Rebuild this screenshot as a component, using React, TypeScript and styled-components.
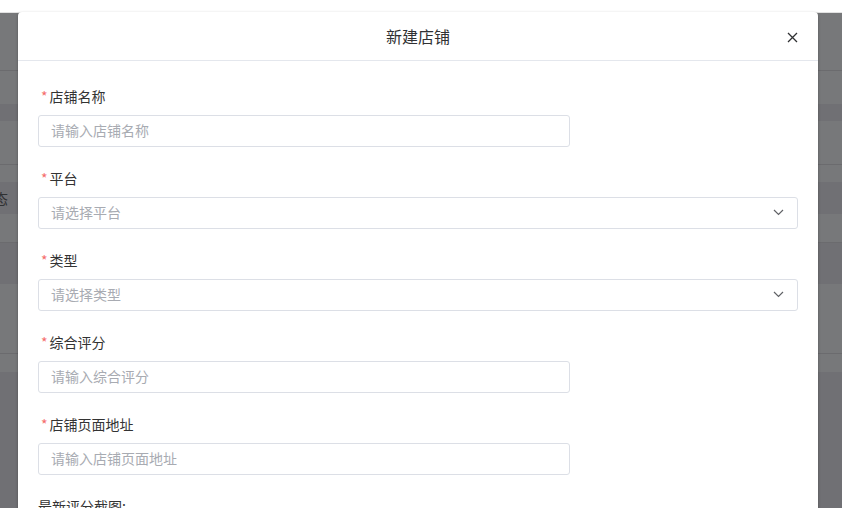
import styled, { createGlobalStyle } from "styled-components";

const GlobalStyle = createGlobalStyle`
  html, body {
    margin: 0;
    padding: 0;
    background: #fff;
    font-family: "Microsoft YaHei", "Noto Sans CJK SC", "Liberation Sans", sans-serif;
  }
  * { box-sizing: border-box; }
`;

const Page = styled.div`
  position: relative;
  width: 842px;
  height: 508px;
  overflow: hidden;
`;

const TopStrip = styled.div`
  height: 13px;
  background: #fff;
  border-bottom: 1px solid #e2e2e2;
`;

const BgTable = styled.div`
  display: flex;
  flex-direction: column;
  background: #eef0f5;
`;

const BgRow = styled.div<{ $h: number; $dark?: boolean; $line?: boolean }>`
  height: ${(p) => p.$h}px;
  background: ${(p) => (p.$dark ? "#e0e1e8" : "#eef0f5")};
  border-bottom: ${(p) => (p.$line ? "1px solid #d6d7dd" : "none")};
  display: flex;
  align-items: center;
  font-size: 14px;
  color: #606266;
`;

const CutText = styled.span`
  margin-left: -6px;
`;

const Mask = styled.div`
  position: absolute;
  left: 0;
  top: 13px;
  right: 0;
  bottom: 0;
  background: rgba(0, 0, 0, 0.5);
`;

const Dialog = styled.div`
  position: absolute;
  left: 18px;
  top: 12px;
  width: 800px;
  height: 520px;
  background: #fff;
  border-radius: 4px;
  box-shadow: 0 1px 3px rgba(0, 0, 0, 0.3);
`;

const Header = styled.div`
  height: 49px;
  border-bottom: 1px solid #e4e7ed;
  display: flex;
  align-items: center;
  justify-content: center;
  position: relative;
  font-size: 16px;
  color: #303133;
`;

const CloseBtn = styled.button`
  position: absolute;
  right: 20px;
  top: 19px;
  width: 12px;
  height: 12px;
  padding: 0;
  border: none;
  background: none;
  display: flex;
  align-items: center;
  justify-content: center;
  cursor: pointer;
`;

const Body = styled.div`
  padding: 23px 20px 0;
  display: flex;
  flex-direction: column;
`;

const FormItem = styled.div`
  display: flex;
  flex-direction: column;
  margin-bottom: 19px;
`;

const Label = styled.label`
  display: flex;
  align-items: center;
  height: 23px;
  margin-bottom: 8px;
  font-size: 14px;
  color: #333;
`;

const Star = styled.span`
  color: #f56c6c;
  margin: 0 2px 0 3px;
  font-size: 14px;
`;

const InputBox = styled.div<{ $wide?: boolean }>`
  width: ${(p) => (p.$wide ? "760px" : "532px")};
  height: 32px;
  border: 1px solid #dcdfe6;
  border-radius: 3px;
  display: flex;
  align-items: center;
  justify-content: space-between;
  padding: 0 13px 2px 12px;
  font-size: 14px;
  color: #a8abb2;
`;

const Chevron = () => (
  <svg width="11" height="7" viewBox="0 0 11 7">
    <path d="M1 1 L5.5 5.5 L10 1" fill="none" stroke="#606266" strokeWidth="1.2" />
  </svg>
);

const fields = [
  { label: "店铺名称", placeholder: "请输入店铺名称", select: false },
  { label: "平台", placeholder: "请选择平台", select: true },
  { label: "类型", placeholder: "请选择类型", select: true },
  { label: "综合评分", placeholder: "请输入综合评分", select: false },
  { label: "店铺页面地址", placeholder: "请输入店铺页面地址", select: false },
];

export default function App() {
  return (
    <Page>
      <GlobalStyle />
      <TopStrip />
      <BgTable>
        <BgRow $h={58} $line />
        <BgRow $h={33} />
        <BgRow $h={17} $dark />
        <BgRow $h={44} $line />
        <BgRow $h={17} />
        <BgRow $h={32} $dark>
          <CutText>态</CutText>
        </BgRow>
        <BgRow $h={29} $line />
        <BgRow $h={41} $dark />
        <BgRow $h={70} $line />
        <BgRow $h={18} />
        <BgRow $h={140} $dark />
      </BgTable>
      <Mask />
      <Dialog>
        <Header>
          新建店铺
          <CloseBtn aria-label="close">
            <svg width="11" height="11" viewBox="0 0 11 11">
              <path d="M1 1 L10 10 M10 1 L1 10" stroke="#303133" strokeWidth="1.3" />
            </svg>
          </CloseBtn>
        </Header>
        <Body>
          {fields.map((f) => (
            <FormItem key={f.label}>
              <Label>
                <Star>*</Star>
                {f.label}
              </Label>
              <InputBox $wide={f.select}>
                {f.placeholder}
                {f.select && <Chevron />}
              </InputBox>
            </FormItem>
          ))}
          <FormItem>
            <Label>最新评分截图:</Label>
          </FormItem>
        </Body>
      </Dialog>
    </Page>
  );
}
